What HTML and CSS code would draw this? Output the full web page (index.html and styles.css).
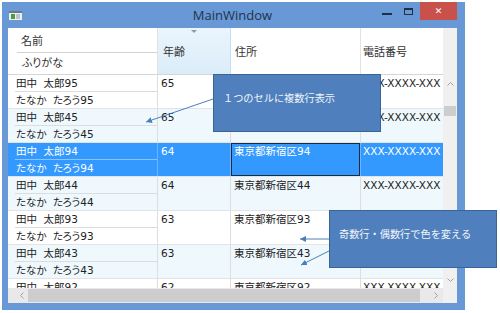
FILE: index.html
```html
<!doctype html>
<html>
    <head>
        <meta charset="utf-8">
        <title>MainWindow</title>
        <link rel="stylesheet" href="styles.css">
    </head>
    <body>
        <div class="window">
            <div class="titlebar">
                <div class="appicon">
                    <svg width="13" height="9" viewBox="0 0 13 9">
                        <rect x="0" y="0" width="13" height="9" fill="#e9eef3"/>
                        <rect x="0" y="0" width="13" height="2" fill="#6c7a88"/>
                        <rect x="2" y="3" width="4" height="5" fill="#4f9d3a"/>
                        <rect x="7" y="3" width="4" height="5" fill="#b9c4cf"/>
                    </svg>
                </div>
                <div class="title">MainWindow</div>
                <div class="controls">
                    <span class="min"></span>
                    <span class="max"></span>
                    <span class="close">&#x2715;</span>
                </div>
            </div>

            <div class="client">
                <div class="header">
                    <div class="hcell hname">
                        <div class="hline top">名前</div>
                        <div class="hline">ふりがな</div>
                    </div>
                    <div class="hcell hage">年齢</div>
                    <div class="hcell haddr">住所</div>
                    <div class="hcell htel">電話番号</div>
                </div>
                <div class="hfiller"></div>

                <div class="rows">
                    <div class="row">
                        <div class="cell name"><div class="line top">田中<span class="sp">　</span>太郎95</div><div class="line">たなか<span class="sp">　</span>たろう95</div></div>
                        <div class="cell age">65</div>
                        <div class="cell addr">東京都新宿区95</div>
                        <div class="cell tel">XXX-XXXX-XXX</div>
                    </div>
                    <div class="row alt">
                        <div class="cell name"><div class="line top">田中<span class="sp">　</span>太郎45</div><div class="line">たなか<span class="sp">　</span>たろう45</div></div>
                        <div class="cell age">65</div>
                        <div class="cell addr">東京都新宿区45</div>
                        <div class="cell tel">XXX-XXXX-XXX</div>
                    </div>
                    <div class="row selected">
                        <div class="cell name"><div class="line top">田中<span class="sp">　</span>太郎94</div><div class="line">たなか<span class="sp">　</span>たろう94</div></div>
                        <div class="cell age">64</div>
                        <div class="cell addr focus">東京都新宿区94</div>
                        <div class="cell tel">XXX-XXXX-XXX</div>
                    </div>
                    <div class="row alt">
                        <div class="cell name"><div class="line top">田中<span class="sp">　</span>太郎44</div><div class="line">たなか<span class="sp">　</span>たろう44</div></div>
                        <div class="cell age">64</div>
                        <div class="cell addr">東京都新宿区44</div>
                        <div class="cell tel">XXX-XXXX-XXX</div>
                    </div>
                    <div class="row">
                        <div class="cell name"><div class="line top">田中<span class="sp">　</span>太郎93</div><div class="line">たなか<span class="sp">　</span>たろう93</div></div>
                        <div class="cell age">63</div>
                        <div class="cell addr">東京都新宿区93</div>
                        <div class="cell tel">XXX-XXXX-XXX</div>
                    </div>
                    <div class="row alt">
                        <div class="cell name"><div class="line top">田中<span class="sp">　</span>太郎43</div><div class="line">たなか<span class="sp">　</span>たろう43</div></div>
                        <div class="cell age">63</div>
                        <div class="cell addr">東京都新宿区43</div>
                        <div class="cell tel">XXX-XXXX-XXX</div>
                    </div>
                    <div class="row">
                        <div class="cell name"><div class="line top">田中<span class="sp">　</span>太郎92</div><div class="line">たなか<span class="sp">　</span>たろう92</div></div>
                        <div class="cell age">62</div>
                        <div class="cell addr">東京都新宿区92</div>
                        <div class="cell tel">XXX-XXXX-XXX</div>
                    </div>
                </div>

                <div class="vscroll">
                    <div class="sarrow"><svg width="7" height="4"><polyline points="0.5,3.5 3.5,0.5 6.5,3.5" fill="none" stroke="#a2a2a2"/></svg></div>
                    <div class="vthumb"></div>
                    <div class="spacer"></div>
                    <div class="sarrow"><svg width="7" height="4"><polyline points="0.5,0.5 3.5,3.5 6.5,0.5" fill="none" stroke="#a2a2a2"/></svg></div>
                </div>

                <div class="hscroll">
                    <div class="harrow left"><svg width="4" height="7"><polyline points="3.5,0.5 0.5,3.5 3.5,6.5" fill="none" stroke="#a2a2a2"/></svg></div>
                    <div class="hthumb"></div>
                    <div class="spacer"></div>
                    <div class="harrow right"><svg width="4" height="7"><polyline points="0.5,0.5 3.5,3.5 0.5,6.5" fill="none" stroke="#a2a2a2"/></svg></div>
                </div>
                <div class="corner"></div>
            </div>
        </div>

        <div class="callout c1">１つのセルに複数行表示</div>
        <div class="callout c2">奇数行・偶数行で色を変える</div>

        <svg class="arrows" width="500" height="313" viewBox="0 0 500 313">
            <defs>
                <marker id="head" markerUnits="userSpaceOnUse" markerWidth="7" markerHeight="6" refX="6" refY="3" orient="auto">
                    <path d="M0,0 L6,3 L0,6 z" fill="#4a7ebb"/>
                </marker>
            </defs>
            <line x1="213" y1="99" x2="146" y2="122" stroke="#4a7ebb" stroke-width="1" marker-end="url(#head)"/>
            <line x1="329" y1="239" x2="300" y2="239" stroke="#4a7ebb" stroke-width="1" marker-end="url(#head)"/>
            <line x1="329" y1="251" x2="301" y2="265" stroke="#4a7ebb" stroke-width="1" marker-end="url(#head)"/>
        </svg>
    </body>
</html>
```

FILE: styles.css
```css
body {
    margin: 0;
    width: 500px;
    height: 313px;
    overflow: hidden;
    position: relative;
    background-color: #fff;
    font-family: "DejaVu Sans", "Noto Sans CJK JP", sans-serif;
    color: #222;
}

/* window frame */
div.window {
    margin: 2px 0 0 2px;
    width: 463px;
    height: 308px;
    box-sizing: border-box;
    padding: 0 8px 7px 6px;
    background-color: #6898d6;
    display: flex;
    flex-direction: column;
}

div.titlebar {
    height: 26px;
    flex: none;
    display: grid;
    grid-template-columns: 1fr auto 1fr;
    align-items: start;
}
div.appicon {
    margin: 9px 0 0 1px;
    height: 9px;
    line-height: 0;
}
div.title {
    font-family: "Open Sans", sans-serif;
    font-size: 13px;
    line-height: 27px;
    color: #22334d;
}
div.controls {
    display: flex;
    justify-content: flex-end;
    align-items: flex-start;
}
span.min {
    width: 10px;
    height: 2px;
    margin: 11px 12px 0 0;
    background-color: #1f2f48;
}
span.max {
    width: 9px;
    height: 7px;
    box-sizing: border-box;
    border: 1px solid #1f2f48;
    border-top-width: 2px;
    margin: 6px 7px 0 0;
}
span.close {
    width: 37px;
    height: 18px;
    background-color: #c9514c;
    color: #fff;
    font-family: "DejaVu Sans", sans-serif;
    font-size: 9px;
    font-weight: bold;
    line-height: 18px;
    text-align: center;
}

/* client area: grid + scrollbars */
div.client {
    height: 275px;
    flex: none;
    background-color: #fff;
    display: grid;
    grid-template-columns: 435px 14px;
    grid-template-rows: 47px 213px 15px;
    overflow: hidden;
}

div.header {
    display: grid;
    grid-template-columns: 150px 73px 130px 82px;
    border-bottom: 1px solid #d6d6d6;
    font-size: 11px;
    font-feature-settings: "palt";
    color: #333;
}
div.hcell {
    border-right: 1px solid #e2e2e2;
    white-space: nowrap;
    overflow: hidden;
}
div.hname {
    padding-top: 4px;
}
div.hline {
    height: 21px;
    line-height: 21px;
    padding-left: 14px;
}
div.hline.top {
    height: 20px;
    line-height: 20px;
    margin-left: 9px;
    padding-left: 4px;
    border-bottom: 1px solid #d2d2d2;
}
div.hage {
    position: relative;
    display: flex;
    align-items: center;
    padding-left: 5px;
    background-image: linear-gradient(#eaf5fd, #dbecf9);
    border-right-color: #c9def0;
}
div.hage::before {
    content: "";
    position: absolute;
    top: 2px;
    left: 33px;
    border-left: 3px solid transparent;
    border-right: 3px solid transparent;
    border-top: 3px solid #8d9cab;
}
div.haddr {
    display: flex;
    align-items: center;
    padding-left: 4px;
}
div.htel {
    display: flex;
    align-items: center;
    padding-left: 2px;
    border-right: none;
}
div.hfiller {
    background-color: #f0f0f0;
}

div.rows {
    overflow: hidden;
    font-size: 10.5px;
    font-feature-settings: "palt";
}
div.row {
    display: grid;
    grid-template-columns: 150px 73px 130px 82px;
    height: 34px;
    box-sizing: border-box;
    border-bottom: 1px solid #e3e3e3;
    background-color: #fff;
}
div.row.alt {
    background-color: #eff9fd;
}
div.row.selected {
    background-color: #3399ff;
    color: #fff;
}
div.cell {
    border-right: 1px solid #dedede;
    line-height: 16px;
    white-space: nowrap;
    overflow: hidden;
    padding-left: 3px;
}
div.cell.name {
    padding-left: 0;
}
div.cell.tel {
    padding-left: 2px;
    border-right: none;
}
div.line {
    height: 16px;
    padding-left: 8px;
}
div.line.top {
    margin-left: 7px;
    padding-left: 1px;
    border-bottom: 1px solid #dcdcdc;
}
span.sp {
    letter-spacing: -4px;
}
div.row.selected div.cell {
    border-right-color: #6cb4ff;
}
div.row.selected div.line.top {
    border-bottom-color: #8cc4ff;
}
div.cell.focus {
    box-shadow: inset 0 0 0 1px #1b2a3f;
}

div.vscroll {
    display: flex;
    flex-direction: column;
    background-color: #f0f0f0;
}
div.sarrow {
    height: 17px;
    display: flex;
    align-items: center;
    justify-content: center;
}
div.vthumb {
    margin: 14px 1px 0 1px;
    height: 10px;
    background-color: #cdcdcd;
}
div.spacer {
    flex: 1;
}

div.hscroll {
    display: flex;
    background-color: #e9e9e9;
}
div.harrow {
    display: flex;
    align-items: center;
    justify-content: center;
}
div.harrow.left {
    width: 20px;
    padding-left: 8px;
    box-sizing: border-box;
}
div.harrow.right {
    width: 14px;
}
div.hthumb {
    width: 392px;
    margin: 1px 0;
    background-color: #cdcdcd;
}
div.corner {
    background-color: #f0f0f0;
}

/* annotations drawn over the screenshot */
div.callout {
    position: absolute;
    width: 168px;
    height: 58px;
    box-sizing: border-box;
    padding: 16px 0 0 9px;
    background-color: #4f80bd;
    border: 1px solid #3a6498;
    color: #f2f6fb;
    font-family: "Noto Sans CJK JP", sans-serif;
    font-size: 10.2px;
    line-height: 14px;
    white-space: nowrap;
}
div.c1 {
    left: 213px;
    top: 74px;
}
div.c2 {
    left: 329px;
    top: 210px;
}
svg.arrows {
    position: absolute;
    left: 0;
    top: 0;
    pointer-events: none;
}
```
